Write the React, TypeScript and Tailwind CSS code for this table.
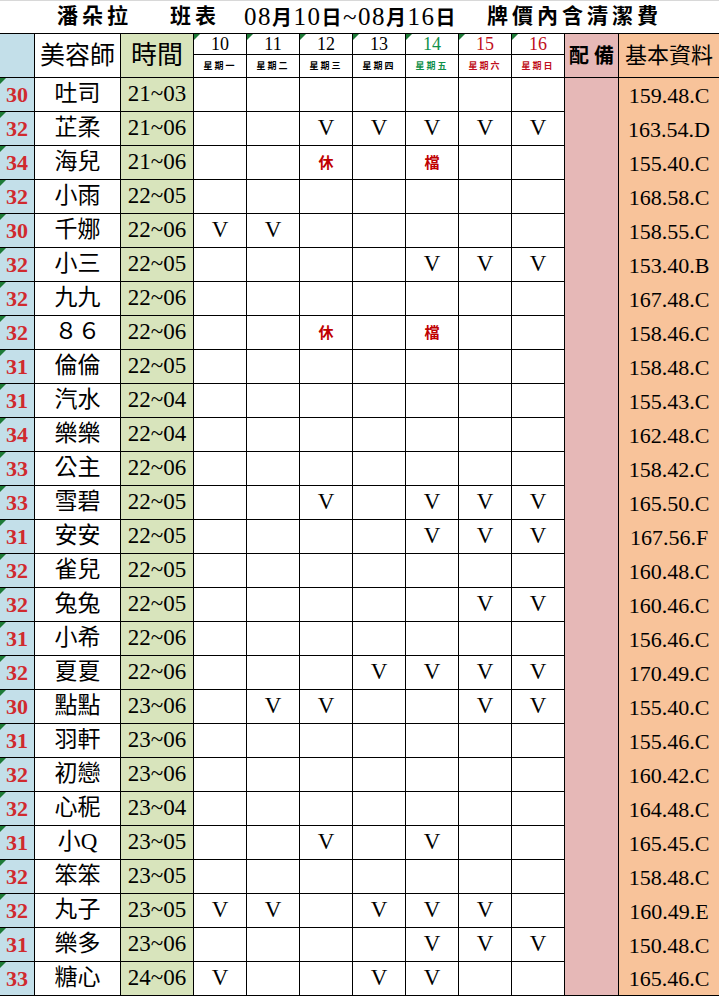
const SERIF = "font-['Liberation_Serif','Noto_Sans_CJK_TC',serif]";

type Row = {
  no: number;
  name: string;
  time: string;
  days: Record<number, string>;
  info: string;
};

const V = "V";

const rows: Row[] = [
  { no: 30, name: "吐司", time: "21~03", days: {}, info: "159.48.C" },
  { no: 32, name: "芷柔", time: "21~06", days: { 12: V, 13: V, 14: V, 15: V, 16: V }, info: "163.54.D" },
  { no: 34, name: "海兒", time: "21~06", days: { 12: "休", 14: "檔" }, info: "155.40.C" },
  { no: 32, name: "小雨", time: "22~05", days: {}, info: "168.58.C" },
  { no: 30, name: "千娜", time: "22~06", days: { 10: V, 11: V }, info: "158.55.C" },
  { no: 32, name: "小三", time: "22~05", days: { 14: V, 15: V, 16: V }, info: "153.40.B" },
  { no: 32, name: "九九", time: "22~06", days: {}, info: "167.48.C" },
  { no: 32, name: "８６", time: "22~06", days: { 12: "休", 14: "檔" }, info: "158.46.C" },
  { no: 31, name: "倫倫", time: "22~05", days: {}, info: "158.48.C" },
  { no: 31, name: "汽水", time: "22~04", days: {}, info: "155.43.C" },
  { no: 34, name: "樂樂", time: "22~04", days: {}, info: "162.48.C" },
  { no: 33, name: "公主", time: "22~06", days: {}, info: "158.42.C" },
  { no: 33, name: "雪碧", time: "22~05", days: { 12: V, 14: V, 15: V, 16: V }, info: "165.50.C" },
  { no: 31, name: "安安", time: "22~05", days: { 14: V, 15: V, 16: V }, info: "167.56.F" },
  { no: 32, name: "雀兒", time: "22~05", days: {}, info: "160.48.C" },
  { no: 32, name: "兔兔", time: "22~05", days: { 15: V, 16: V }, info: "160.46.C" },
  { no: 31, name: "小希", time: "22~06", days: {}, info: "156.46.C" },
  { no: 32, name: "夏夏", time: "22~06", days: { 13: V, 14: V, 15: V, 16: V }, info: "170.49.C" },
  { no: 30, name: "點點", time: "23~06", days: { 11: V, 12: V, 15: V, 16: V }, info: "155.40.C" },
  { no: 31, name: "羽軒", time: "23~06", days: {}, info: "155.46.C" },
  { no: 32, name: "初戀", time: "23~06", days: {}, info: "160.42.C" },
  { no: 32, name: "心秜", time: "23~04", days: {}, info: "164.48.C" },
  { no: 31, name: "小Q", time: "23~05", days: { 12: V, 14: V }, info: "165.45.C" },
  { no: 32, name: "笨笨", time: "23~05", days: {}, info: "158.48.C" },
  { no: 32, name: "丸子", time: "23~05", days: { 10: V, 11: V, 13: V, 14: V, 15: V }, info: "160.49.E" },
  { no: 31, name: "樂多", time: "23~06", days: { 14: V, 15: V, 16: V }, info: "150.48.C" },
  { no: 33, name: "糖心", time: "24~06", days: { 10: V, 13: V, 14: V }, info: "165.46.C" },
];

const days = [
  { d: 10, w: "星期一", color: "text-black" },
  { d: 11, w: "星期二", color: "text-black" },
  { d: 12, w: "星期三", color: "text-black" },
  { d: 13, w: "星期四", color: "text-black" },
  { d: 14, w: "星期五", color: "text-[#10904a]" },
  { d: 15, w: "星期六", color: "text-[#c01020]" },
  { d: 16, w: "星期日", color: "text-[#c01020]" },
];

function Corner() {
  // little green comment marker in the cell's top-left corner
  return (
    <span className="absolute left-0 top-0 h-0 w-0 border-t-[6px] border-r-[6px] border-t-[#1d7a36] border-r-transparent" />
  );
}

export default function App() {
  return (
    <div className={`w-[719px] h-[996px] bg-white text-black ${SERIF}`}>
      {/* title */}
      <div className="h-[34px] border-t border-t-[#d8d8d8] border-b border-b-black flex items-center pl-[57px] whitespace-nowrap">
        <span className="text-[21px] font-bold tracking-[4px]">潘朵拉</span>
        <span className="ml-[38px] text-[21px] font-bold tracking-[4px]">班表</span>
        <span className="ml-[24px] text-[25px] tracking-[1.5px]">
          08<span className="text-[20px] font-bold">月</span>10
          <span className="text-[20px] font-bold">日</span>~08
          <span className="text-[20px] font-bold">月</span>16
          <span className="text-[20px] font-bold">日</span>
        </span>
        <span className="ml-[30px] text-[21px] font-bold tracking-[4px]">牌價內含清潔費</span>
      </div>

      <div className="grid grid-cols-[35px_86px_73px_repeat(7,53px)_54px_100px] grid-rows-[44px_repeat(27,34px)]">
        {/* header */}
        <div className="bg-[#c3dfe9] border-r border-b border-black" />
        <div className="flex items-center justify-center border-r border-b border-black text-[25px]">
          美容師
        </div>
        <div className="flex items-center justify-center bg-[#d8e4bc] border-r border-b border-black text-[26px]">
          時間
        </div>
        {days.map((d) => (
          <div key={d.d} className="relative flex flex-col border-r border-b border-black">
            <Corner />
            <div className={`h-[21px] flex items-center justify-center border-b border-black text-[18px] leading-none ${d.color}`}>
              {d.d}
            </div>
            <div
              className={`flex-1 flex items-center justify-center text-[9px] font-bold tracking-[2px] font-['Noto_Sans_CJK_TC',sans-serif] ${d.color}`}
            >
              {d.w}
            </div>
          </div>
        ))}
        <div className="flex items-center justify-center bg-[#e6b8b7] border-r border-b border-black text-[20px] font-bold whitespace-pre">
          配 備
        </div>
        <div className="flex items-center justify-center bg-[#f8c39a] border-b border-black text-[22px]">
          基本資料
        </div>

        {/* rows */}
        {rows.map((r, i) => {
          const last = i === rows.length - 1;
          return [
            <div
              key={`n${i}`}
              className="relative flex items-center justify-center bg-[#c3dfe9] border-r border-b border-black text-[22px] font-bold text-[#d02a2e]"
            >
              <Corner />
              {r.no}
            </div>,
            <div key={`m${i}`} className="flex items-center justify-center border-r border-b border-black text-[23px]">
              {r.name}
            </div>,
            <div
              key={`t${i}`}
              className="flex items-center justify-center bg-[#d8e4bc] border-r border-b border-black text-[23px]"
            >
              {r.time}
            </div>,
            ...days.map((d) => {
              const v = r.days[d.d];
              return (
                <div key={`d${i}-${d.d}`} className="flex items-center justify-center border-r border-b border-black">
                  {v === "V" ? (
                    <span className="text-[23px]">V</span>
                  ) : v ? (
                    <span className="text-[15px] font-bold text-[#c00000] font-['Noto_Sans_CJK_TC',sans-serif]">
                      {v}
                    </span>
                  ) : null}
                </div>
              );
            }),
            <div
              key={`p${i}`}
              className={`bg-[#e6b8b7] border-r border-black ${last ? "border-b" : ""}`}
            />,
            <div
              key={`i${i}`}
              className={`flex items-center justify-center bg-[#f8c39a] border-black text-[22px] ${last ? "border-b" : ""}`}
            >
              {r.info}
            </div>,
          ];
        })}
      </div>
    </div>
  );
}
